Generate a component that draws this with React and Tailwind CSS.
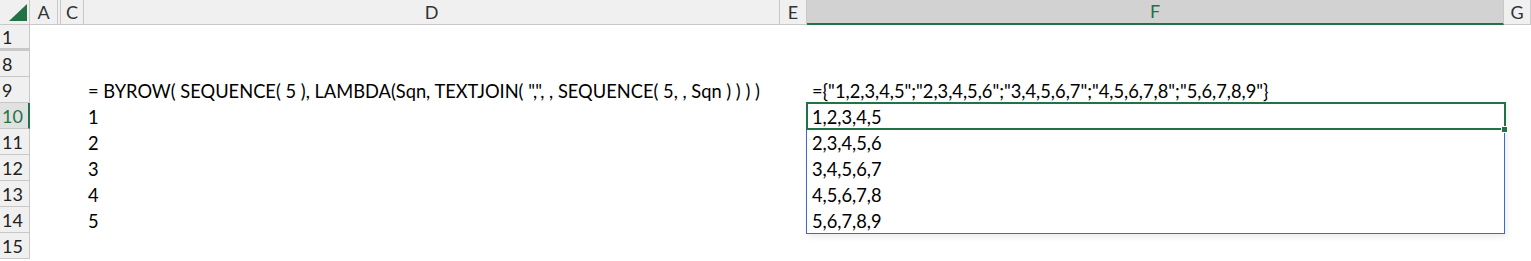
import React from 'react';

const FONT = { fontFamily: 'Lato, "Open Sans", sans-serif' };

const rows = [
  { n: '1', d: '', f: '', gapAfter: true },
  { n: '8', d: '', f: '' },
  {
    n: '9',
    d: '= BYROW( SEQUENCE( 5 ), LAMBDA(Sqn, TEXTJOIN( ",", , SEQUENCE( 5, , Sqn ) ) ) )',
    f: '={"1,2,3,4,5";"2,3,4,5,6";"3,4,5,6,7";"4,5,6,7,8";"5,6,7,8,9"}',
  },
  { n: '10', d: '1', f: '1,2,3,4,5', active: true },
  { n: '11', d: '2', f: '2,3,4,5,6' },
  { n: '12', d: '3', f: '3,4,5,6,7' },
  { n: '13', d: '4', f: '4,5,6,7,8' },
  { n: '14', d: '5', f: '5,6,7,8,9' },
  { n: '15', d: '', f: '' },
];

const HeaderCell = ({ label, className }) => (
  <div className={`flex items-center justify-center border-r border-b border-[#c8c8c8] text-[18px] text-[#333] ${className}`}>
    {label}
  </div>
);

export default function App() {
  return (
    <div className="relative w-[1531px] h-[261px] overflow-hidden bg-white text-black" style={FONT}>
      {/* column headers */}
      <div className="flex h-[25px] bg-[#f0f0f0]">
        <div className="relative w-[30px] shrink-0 border-r border-b border-[#c8c8c8]">
          <svg className="absolute left-[8px] top-[4px]" width="19" height="17" viewBox="0 0 19 17">
            <polygon points="1,17 19,17 19,0" fill="#217346" />
          </svg>
        </div>
        <HeaderCell label="A" className="w-[28px] shrink-0" />
        <div className="w-[2px] shrink-0 border-b border-[#c8c8c8]" />
        <HeaderCell label="C" className="w-[24px] shrink-0 border-l" />
        <HeaderCell label="D" className="w-[696px] shrink-0" />
        <HeaderCell label="E" className="w-[27px] shrink-0" />
        <div className="flex w-[697px] shrink-0 items-center justify-center bg-[#d2d2d2] border-b-2 border-r border-r-[#c8c8c8] border-b-[#217346] text-[18px] text-[#217346]">
          F
        </div>
        <HeaderCell label="G" className="flex-1" />
      </div>

      {/* sheet rows */}
      {rows.map((r) => (
        <div key={r.n} className={`flex ${r.gapAfter ? 'mb-[2px] h-[24px]' : 'h-[26px]'}`}>
          <div
            className={`flex w-[30px] shrink-0 items-center pl-[2px] text-[18px] leading-none border-b border-[#c8c8c8] ${
              r.active
                ? 'bg-[#e1e1e1] text-[#217346] border-r-2 border-r-[#217346]'
                : 'bg-[#f0f0f0] text-[#222] border-r border-r-[#c8c8c8]'
            } ${r.gapAfter ? 'shadow-[0_2px_0_#c8c8c8]' : ''}`}
          >
            {r.n}
          </div>
          <div className="w-[54px] shrink-0" />
          <div className="flex w-[696px] shrink-0 items-end pb-[1px] pl-[4px] text-[18.3px] leading-[22px] whitespace-nowrap">
            {r.d}
          </div>
          <div className="w-[27px] shrink-0" />
          <div className="flex w-[697px] shrink-0 items-end pb-[1px] pl-[5px] text-[18.3px] leading-[22px] whitespace-nowrap">
            {r.f}
          </div>
          <div className="flex-1" />
        </div>
      ))}

      {/* spill range border */}
      <div className="absolute left-[806px] top-[103px] w-[699px] h-[131px] border border-[#3a6cc6] shadow-[2px_3px_6px_rgba(0,0,0,0.08)] pointer-events-none" />
      {/* active cell */}
      <div className="absolute left-[806px] top-[102px] w-[700px] h-[28px] border-2 border-[#217346] pointer-events-none" />
      {/* fill handle */}
      <div className="absolute left-[1501px] top-[126px] w-[7px] h-[7px] bg-[#217346] border border-white" />
    </div>
  );
}
